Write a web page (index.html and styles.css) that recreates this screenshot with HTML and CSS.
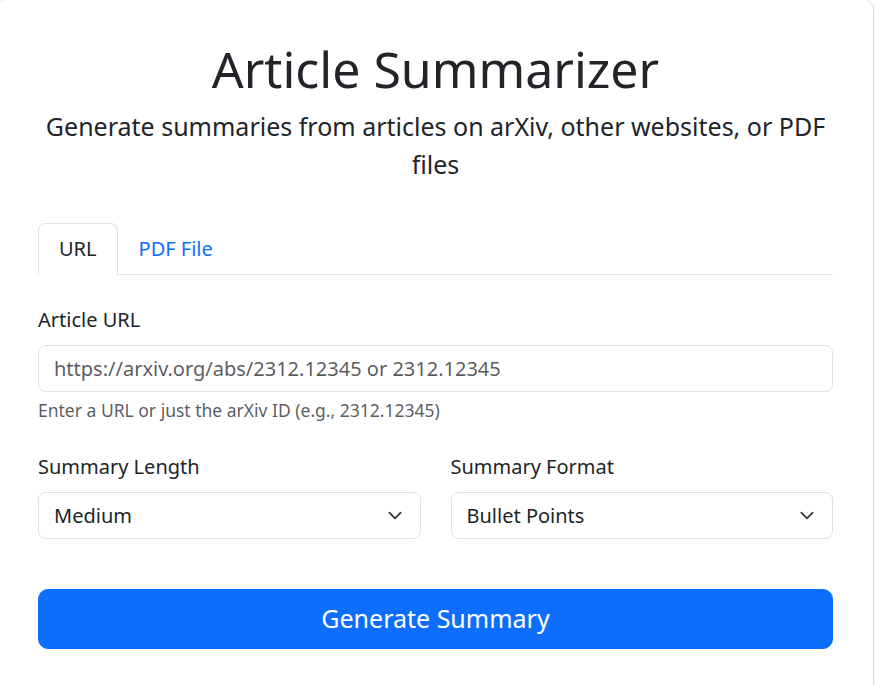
FILE: index.html
```html
<!DOCTYPE html>
<html lang="en">
<head>
<meta charset="utf-8">
<title>Article Summarizer</title>
<link rel="stylesheet" href="styles.css">
</head>
<body>
<div class="card">
  <header class="intro">
    <h1 class="title">Article Summarizer</h1>
    <p class="lead">Generate summaries from articles on arXiv, other websites, or PDF files</p>
  </header>

  <ul class="tabs">
    <li class="tab active">URL</li>
    <li class="tab">PDF File</li>
  </ul>

  <form class="pane">
    <div class="group group-url">
      <label class="label" for="url">Article URL</label>
      <input class="control" id="url" type="text" placeholder="https://arxiv.org/abs/2312.12345 or 2312.12345">
      <div class="hint">Enter a URL or just the arXiv ID (e.g., 2312.12345)</div>
    </div>

    <div class="row">
      <div class="group">
        <label class="label" for="len">Summary Length</label>
        <div class="select">
          <span>Medium</span>
          <svg class="chev" viewBox="0 0 16 16" width="20" height="15"><path fill="none" stroke="#343a40" stroke-linecap="round" stroke-linejoin="round" stroke-width="2" d="m2 5 6 6 6-6"/></svg>
        </div>
      </div>
      <div class="group">
        <label class="label" for="fmt">Summary Format</label>
        <div class="select">
          <span>Bullet Points</span>
          <svg class="chev" viewBox="0 0 16 16" width="20" height="15"><path fill="none" stroke="#343a40" stroke-linecap="round" stroke-linejoin="round" stroke-width="2" d="m2 5 6 6 6-6"/></svg>
        </div>
      </div>
    </div>

    <button class="btn" type="button">Generate Summary</button>
  </form>
</div>
</body>
</html>
```

FILE: styles.css
```css
* { box-sizing: border-box; }

html, body {
  margin: 0;
  padding: 0;
  background: #fff;
}

body {
  font-family: "Noto Sans", "Open Sans", sans-serif;
  font-size: 20px;
  line-height: 1.5;
  color: #212529;
  overflow: hidden;
}

.card {
  width: 877px;
  margin: -2px 0 0 -3px;
  padding: 40px 40px 60px;
  border: 1px solid #dee2e6;
  border-radius: 12px;
  background: #fff;
  box-shadow: 0 2px 6px rgba(0, 0, 0, 0.08);
}

.intro {
  text-align: center;
  margin-bottom: 40px;
}

.title {
  margin: 0 0 9px;
  font-size: 50px;
  font-weight: 400;
  line-height: 1.2;
}

.lead {
  margin: 0;
  font-size: 25px;
  font-weight: 400;
  line-height: 1.5;
}

.tabs {
  display: flex;
  list-style: none;
  margin: 0;
  padding: 0;
  border-bottom: 1px solid #dee2e6;
}

.tab {
  padding: 10px 20px;
  margin-bottom: -1px;
  border: 1px solid transparent;
  border-top-left-radius: 7.5px;
  border-top-right-radius: 7.5px;
  color: #0d6efd;
}

.tab.active {
  color: #212529;
  background: #fff;
  border-color: #dee2e6 #dee2e6 #fff;
}

.pane {
  padding-top: 30px;
}

.group-url {
  margin-bottom: 29px;
}

.label {
  display: block;
  margin-bottom: 10px;
}

.control {
  display: block;
  width: 100%;
  padding: 7.5px 15px;
  font: inherit;
  color: #212529;
  background: #fff;
  border: 1px solid #dee2e6;
  border-radius: 7.5px;
  outline: none;
}

.control::placeholder {
  color: rgba(33, 37, 41, 0.75);
  opacity: 1;
}

.hint {
  margin-top: 5px;
  font-size: 17.5px;
  color: rgba(33, 37, 41, 0.75);
}

.row {
  display: grid;
  grid-template-columns: 1fr 1fr;
  column-gap: 30px;
  margin-bottom: 50px;
}

.select {
  display: flex;
  align-items: center;
  justify-content: space-between;
  padding: 7.5px 15px;
  border: 1px solid #dee2e6;
  border-radius: 7.5px;
  background: #fff;
}

.chev {
  display: block;
}

.btn {
  display: block;
  width: 100%;
  padding: 10px 20px;
  font: inherit;
  font-size: 25px;
  line-height: 1.5;
  color: #fff;
  background: #0d6efd;
  border: 1px solid #0d6efd;
  border-radius: 10px;
  cursor: pointer;
}
```
